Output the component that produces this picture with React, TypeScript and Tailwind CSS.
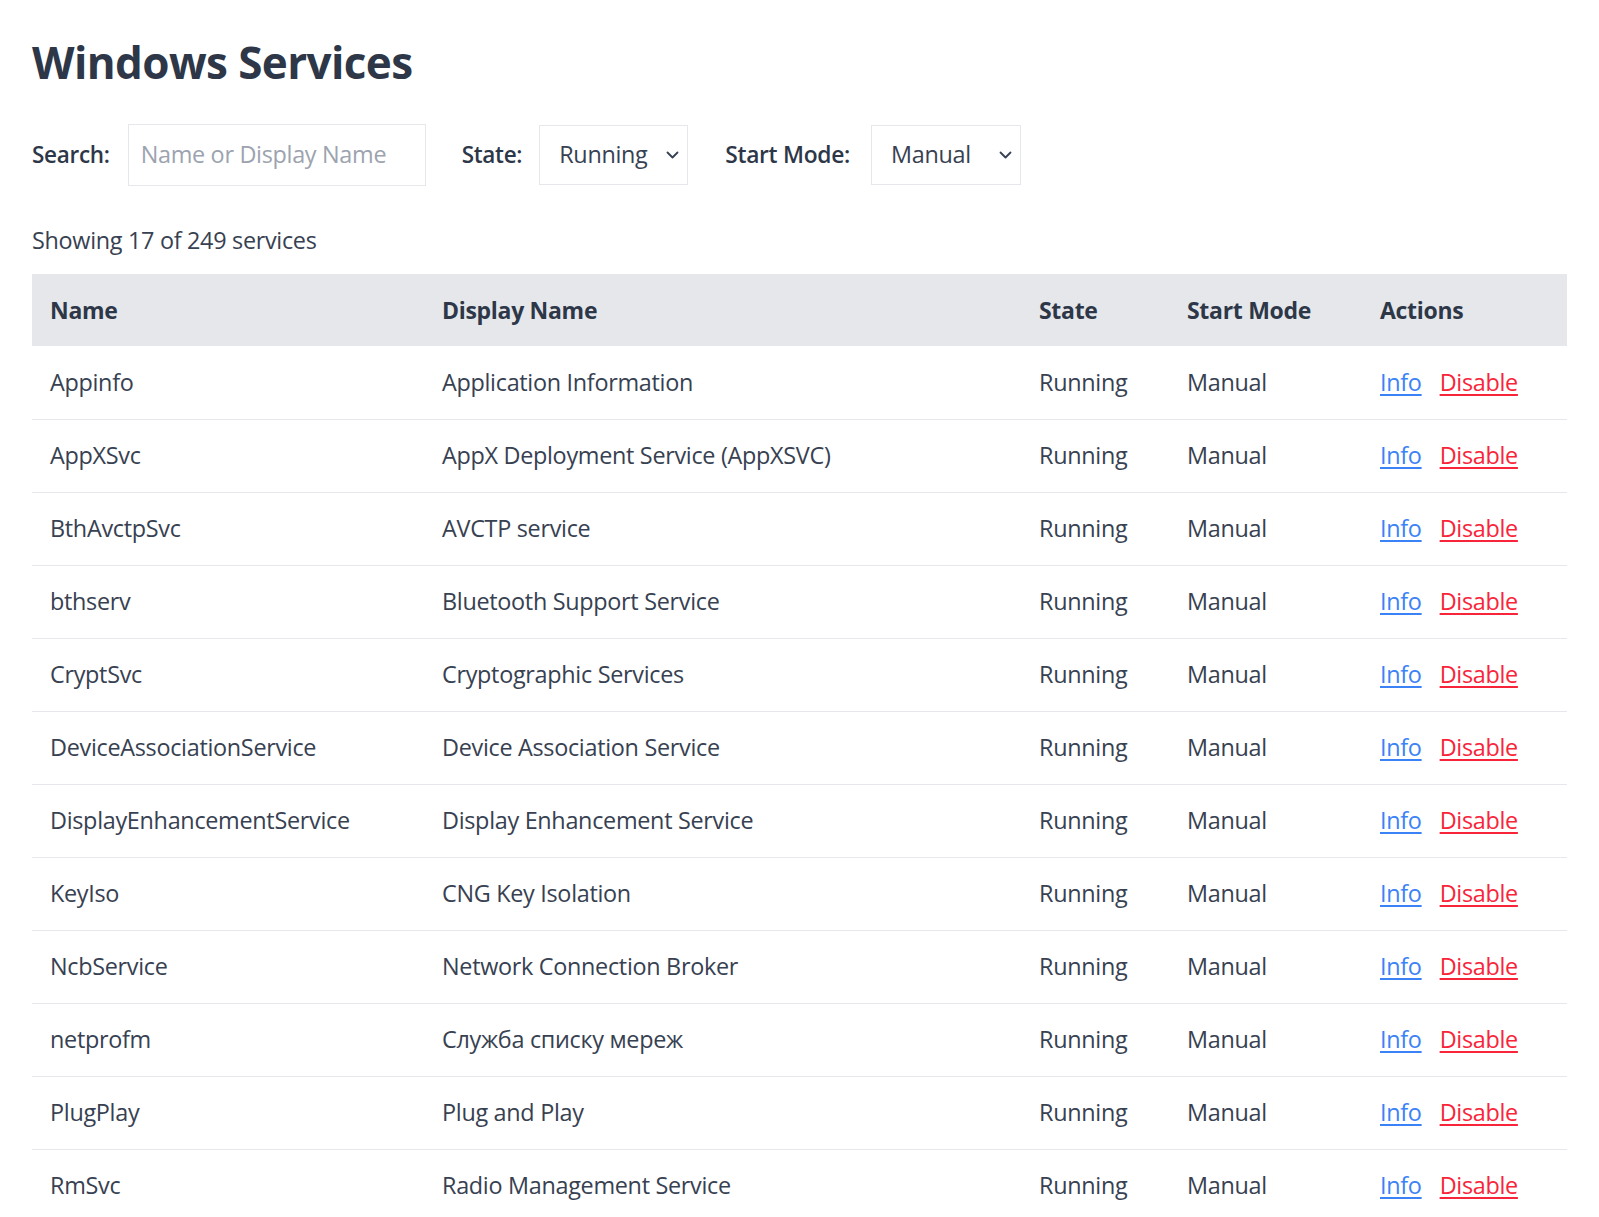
import React from "react";

const rows: [string, string][] = [
  ["Appinfo", "Application Information"],
  ["AppXSvc", "AppX Deployment Service (AppXSVC)"],
  ["BthAvctpSvc", "AVCTP service"],
  ["bthserv", "Bluetooth Support Service"],
  ["CryptSvc", "Cryptographic Services"],
  ["DeviceAssociationService", "Device Association Service"],
  ["DisplayEnhancementService", "Display Enhancement Service"],
  ["KeyIso", "CNG Key Isolation"],
  ["NcbService", "Network Connection Broker"],
  ["netprofm", "Служба списку мереж"],
  ["PlugPlay", "Plug and Play"],
  ["RmSvc", "Radio Management Service"],
  ["StateRepository", "State Repository Service"],
  ["TimeBrokerSvc", "Time Broker"],
  ["TokenBroker", "Web Account Manager"],
  ["WbioSrvc", "Windows Biometric Service"],
  ["wlidsvc", "Microsoft Account Sign-in Assistant"],
];

function Chevron() {
  return (
    <svg width="13" height="8" viewBox="0 0 13 8" fill="none" className="shrink-0">
      <path d="M1.5 1.5 L6.5 6.5 L11.5 1.5" stroke="#374151" strokeWidth="1.8" strokeLinecap="round" strokeLinejoin="round" />
    </svg>
  );
}

export default function App() {
  return (
    <div
      className="min-h-screen bg-white px-[32px] pt-[26px] text-[#374151]"
      style={{ fontFamily: '"Open Sans", "Noto Sans", sans-serif' }}
    >
      <h1 className="text-[44px] font-bold leading-[72px] tracking-[-0.6px] text-[#2d3748]">Windows Services</h1>

      <div className="mt-[26px] flex items-center text-[23.4px] tracking-[-0.3px]">
        <label className="text-[22.5px] font-semibold text-[#2d3748]">Search:</label>
        <div className="ml-[18px] flex h-[62px] w-[298px] items-center border border-[#e5e7eb] px-[12px]">
          <span className="text-[#9ca3af]">Name or Display Name</span>
        </div>
        <label className="ml-[36px] text-[22.5px] font-semibold text-[#2d3748]">State:</label>
        <div className="ml-[17px] flex h-[60px] w-[149px] items-center justify-between border border-[#e5e7eb] pl-[19px] pr-[8px]">
          <span>Running</span>
          <Chevron />
        </div>
        <label className="ml-[37px] text-[22.8px] font-semibold text-[#2d3748]">Start Mode:</label>
        <div className="ml-[21px] flex h-[60px] w-[150px] items-center justify-between border border-[#e5e7eb] pl-[19px] pr-[8px]">
          <span>Manual</span>
          <Chevron />
        </div>
      </div>

      <div className="mt-[38px] text-[23.4px] leading-[32px] tracking-[-0.3px]">Showing 17 of 249 services</div>

      <table className="mt-[18px] w-full border-collapse text-[23.4px] tracking-[-0.3px]">
        <colgroup>
          <col className="w-[392px]" />
          <col className="w-[597px]" />
          <col className="w-[148px]" />
          <col className="w-[193px]" />
          <col />
        </colgroup>
        <thead>
          <tr className="bg-[#e5e7eb] text-left">
            <th className="h-[72px] px-[18px] text-[23px] font-bold text-[#2d3748]">Name</th>
            <th className="h-[72px] px-[18px] text-[23px] font-bold text-[#2d3748]">Display Name</th>
            <th className="h-[72px] px-[18px] text-[23px] font-bold text-[#2d3748]">State</th>
            <th className="h-[72px] px-[18px] text-[23px] font-bold text-[#2d3748]">Start Mode</th>
            <th className="h-[72px] px-[18px] text-[23px] font-bold text-[#2d3748]">Actions</th>
          </tr>
        </thead>
        <tbody>
          {rows.map(([name, display]) => (
            <tr key={name} className="border-b border-[#e5e7eb]">
              <td className="h-[73px] px-[18px]">{name}</td>
              <td className="h-[73px] px-[18px]">{display}</td>
              <td className="h-[73px] px-[18px]">Running</td>
              <td className="h-[73px] px-[18px]">Manual</td>
              <td className="h-[73px] px-[18px] whitespace-nowrap">
                <a href="#" className="mr-[18px] text-[#3b82f6] underline underline-offset-[3px]">Info</a>
                <a href="#" className="text-[#f8253a] underline underline-offset-[3px]">Disable</a>
              </td>
            </tr>
          ))}
        </tbody>
      </table>
    </div>
  );
}
